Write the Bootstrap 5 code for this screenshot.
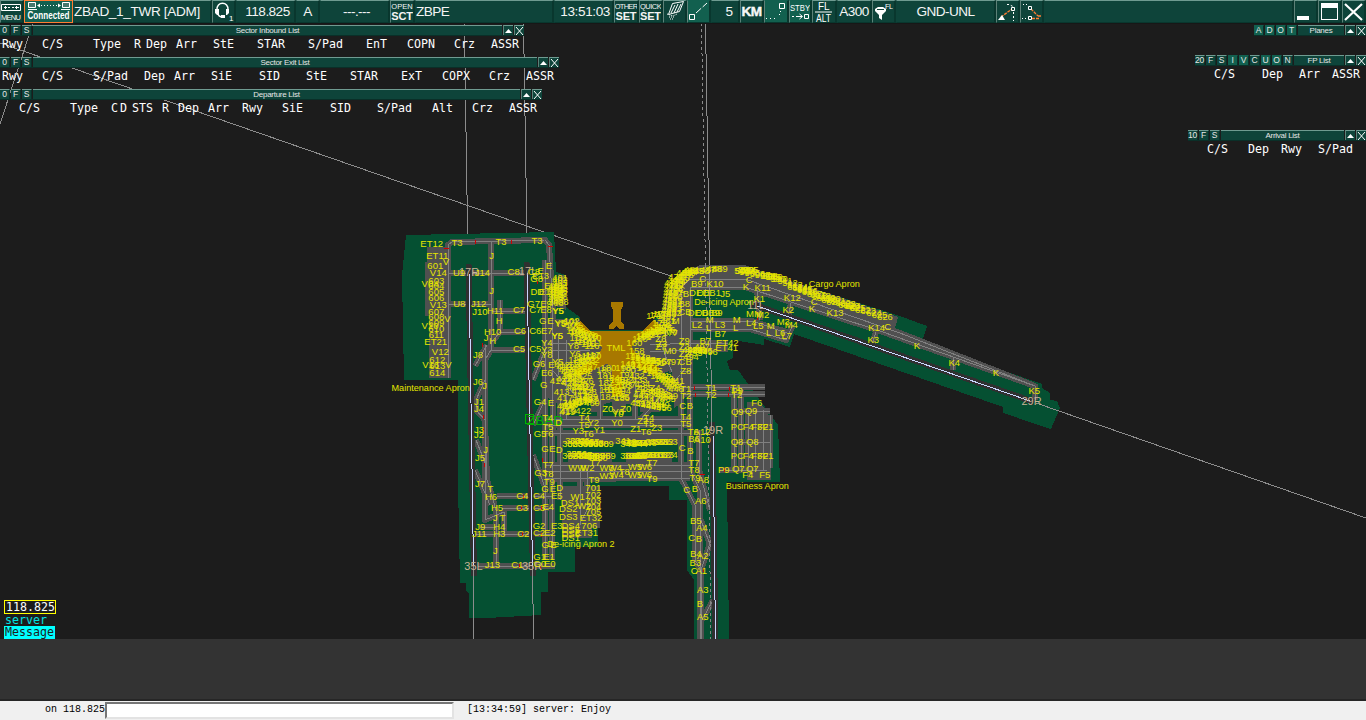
<!DOCTYPE html>
<html lang="en">
<head>
<meta charset="utf-8">
<meta name="viewport" content="width=device-width, initial-scale=1">
<title>ZBAD_1_TWR</title>
<link href="https://cdn.jsdelivr.net/npm/bootstrap@5.3.0/dist/css/bootstrap.min.css" rel="stylesheet">
<style>
body{width:1366px;height:720px;background:#1c1c1c;color:#fff;font-family:"Liberation Sans",Arial,sans-serif;line-height:1}
.topbar{display:grid;height:24px;background:#0a2f28;border-bottom:1px solid #171717;grid-template-columns:24px 49px 139px 24px 60px 24px 70px 25px 139px 60px 25px 24px 24px 24px 29px 24px 25px 23px 25px 35px 24px 100px 24px 24px 250px 24px 24px 24px}
.cell{background:#0e443a;border-top:1px solid #6f9b91;border-left:1px solid #5d8178;border-right:2px solid #09372e;border-bottom:1px solid #09372e;height:23px;overflow:hidden;font-size:13.6px;letter-spacing:-.55px;display:flex;align-items:center;justify-content:center;white-space:nowrap;color:#f4f4f4}
.cell svg{flex:none;letter-spacing:0}
.lit{background:#12604f;border-top-color:#12604f}
.flat{border-left-color:#0e443a}
.conn{background:#12604f;border:1px solid #ff7d32;height:23px}
.two{flex-direction:column;font-weight:700;font-size:11px;line-height:10px;letter-spacing:-.2px}
.two small{font-size:7.5px;line-height:9px;font-weight:400;letter-spacing:0}
.radar{height:615px}
.chart{left:0;top:-24px;z-index:0}
.lists{z-index:1}
.bar{height:11px;font-size:8px;letter-spacing:-.28px;color:#e6e6e6;border-bottom:1px solid #0a2f28}
.bar>*{background:#0e443a;border-top:1px solid #6f9b91;height:10px;display:flex;align-items:center;justify-content:center;white-space:nowrap}
.key{width:10px;margin-right:1px;border-right:1px solid #0a2f28;font-size:8.5px;letter-spacing:-.3px}
.key.on{background:#12604f;border-top-color:#12604f}
.sq{width:10px;margin-left:1px;border-left:1px solid #5d8178}
.heads{font:11.63px/16px "DejaVu Sans Mono",monospace;white-space:pre}
.comm{left:4px;top:576px;font:11.63px/13px "DejaVu Sans Mono",monospace;z-index:1}
.freq{border:1px solid #ffff00;line-height:12px;height:14px;width:52px;padding-left:1px}
.msg{background:#00ffff;color:#1c1c1c;width:51px}
.msg,.srv{padding-left:1px}
.srv{color:#00e0e0;height:12px;line-height:12px}
.strip{height:62px;background:#333;border-bottom:2px solid #262626}
.status{height:19px;background:#f0f0f0;color:#000;font:10px/17px "Liberation Mono",monospace;white-space:pre}
.entry{width:349px;height:17px;margin-top:1px;border:2px solid;border-color:#767676 #e3e3e3 #e3e3e3 #767676;border-radius:0;background:#fff;padding:0}
</style>
</head>
<body class="overflow-hidden d-flex flex-column m-0">
<header class="topbar">
  <div class="cell"><svg width="21" height="21"><path d="M.500 3.500h19v6h-19zM3 6.500h3M7 6.500h2M11 6.500h2M14 6.500h4M4.500 5v3M15.500 5v3" fill="none" stroke="#fff"/><text x="0" y="19" font-size="7.500" textLength="20" fill="#fff">MENU</text></svg></div>
  <div class="cell conn"><svg width="45" height="21"><path d="M2.500 1.500h7v5h-7zM36.500 1.500h7v5h-7z" fill="#47786e" stroke="#fff"/><path d="M2 8.500h9M35 8.500h9" stroke="#fff"/><path d="M12 4.500h22" stroke="#fff" stroke-dasharray="1 2"/><path d="M11 4.500l3-2v4zM35 4.500l-3-2v4z" fill="#fff"/><text x="1.500" y="17.500" font-size="10" font-weight="700" textLength="42" lengthAdjust="spacingAndGlyphs" fill="#fff">Connected</text></svg></div>
  <div class="cell flat justify-content-start" style="letter-spacing:-.35px">ZBAD_1_TWR [ADM]</div>
  <div class="cell"><svg width="22" height="21"><path d="M4 9C3 0 16 0 15 9M5 12c0 3 2 4 5 4" fill="none" stroke="#fff" stroke-width="1.500"/><path d="M2 8h4v6H4L2 12zM13 8h3v4l-2 2h-1zM8 14h4v3H8z" fill="#fff"/><text x="16" y="20" font-size="8" fill="#fff">1</text></svg></div>
  <div class="cell flat ps-1">118.825</div>
  <div class="cell flat">A</div>
  <div class="cell flat ps-1">---.---</div>
  <div class="cell two"><small>OPEN</small>SCT</div>
  <div class="cell flat justify-content-start" style="letter-spacing:-.6px">ZBPE</div>
  <div class="cell flat justify-content-end" style="padding-right:2px;letter-spacing:-.4px">13:51:03</div>
  <div class="cell two"><small style="letter-spacing:-.7px">OTHER</small>SET</div>
  <div class="cell two"><small style="letter-spacing:-.5px">QUICK</small>SET</div>
  <div class="cell"><svg width="22" height="21" fill="none" stroke="#fff"><path d="M8.500 2.500l11-2-4 10-11 3zM11 4l-4 8M14 3l-4 9M17 3l-4 8"/><path d="M3 13l6 2 4-2M5 16h5M6 18h3" stroke-dasharray="1 1"/></svg></div>
  <div class="cell lit"><svg width="22" height="21" fill="none" stroke="#fff"><path d="M1.500 13.500h5v5h-5z"/><path d="M8 12L19 2" stroke-dasharray="7 2"/></svg></div>
  <div class="cell flat ps-2">5</div>
  <div class="cell fw-bold" style="-webkit-text-stroke:.4px #fff">KM</div>
  <div class="cell lit"><svg width="22" height="21" fill="none" stroke="#fff"><path d="M14.500 2.500h5v5h-5z"/><path d="M1 17.500h11M14 13.500h1M15 10.500h1" stroke-dasharray="1 3"/></svg></div>
  <div class="cell lit"><svg width="21" height="21"><text x="0" y="10" font-size="9" textLength="20" lengthAdjust="spacingAndGlyphs" fill="#fff">STBY</text><path d="M2 15.500h2M6 15.500h6M9.500 13l3 2.500-3 2.500M14.500 13.500h4v4h-4z" fill="none" stroke="#fff"/></svg></div>
  <div class="cell"><svg width="22" height="21" fill="#fff"><text x="5" y="8.500" font-size="10">FL</text><path d="M2 11h17" stroke="#fff" stroke-width="1"/><text x="3" y="20.500" font-size="10" textLength="15" lengthAdjust="spacingAndGlyphs">ALT</text></svg></div>
  <div class="cell flat">A300</div>
  <div class="cell"><svg width="22" height="21" fill="#fff"><path d="M2 8l3-2h5l3 2v2l-4 4v5l-3-2v-3L2 10z"/><path d="M4 8.500h7" stroke="#0e443a"/><text x="12" y="7.500" font-size="7" textLength="8">FL</text></svg></div>
  <div class="cell flat">GND-UNL</div>
  <div class="cell"><svg width="22" height="21" fill="none"><path d="M4 16L15 8" stroke="#ff7d32" stroke-width="1.300" stroke-dasharray="3 1"/><path d="M1 19h7l-3-5z" fill="#fff"/><path d="M14.500 6.500h3v3h-3z" stroke="#fff"/><path d="M10 3.500h2l4 2M16.500 11v9" stroke="#fff" stroke-dasharray="2 2"/></svg></div>
  <div class="cell"><svg width="22" height="21" fill="none"><path d="M10 8l7 7M11 17.500h7M17 15h5" stroke="#ff7d32" stroke-width="1.300" stroke-dasharray="3 1"/><path d="M7.500 5.500h3v3h-3zM7.500 15.500h3v3h-3z" stroke="#fff"/><path d="M2 3.500h4M1 17.500h6" stroke="#fff" stroke-dasharray="1 2"/></svg></div>
  <div class="cell flat"></div>
  <div class="cell"><svg width="22" height="21"><path d="M2 15h12v4H2z" fill="#fff"/></svg></div>
  <div class="cell"><svg width="22" height="21"><path d="M2 2h17v17H2zM3 7v11h15V7z" fill="#fff" fill-rule="evenodd"/></svg></div>
  <div class="cell"><svg width="22" height="21"><path d="M2 3l17 16M19 3L2 19" stroke="#fff" stroke-width="2.200"/></svg></div>
</header>

<main class="radar position-relative overflow-hidden">
<svg class="chart position-absolute" width="1366" height="639" viewBox="0 0 1366 639" shape-rendering="crispEdges" fill="none">
  <!-- sector lines -->
  <path d="M0 43L672 276.500M33 23L0 124M464.300 23L474 639M523.500 23L533.500 639" stroke="#8c8c8c"/>
  <path d="M705.500 23L709.500 270" stroke="#8c8c8c"/>
  <path d="M701.500 23L705.500 270" stroke="#8c8c8c" stroke-dasharray="3 3"/>
  <!-- airfield ground -->
  <path fill="#055032" d="M406 235L554 232L556 272L566 275V307L580 317V330H652V322L665 308L668 290L680 274L700 265H745L780 278L897 315L927 326L922 342L1042 384V388L1050 393V400L1057 401L1060 408L1051 429L1003 413V407L794 334L790 347L764 339V345L733 340V358L727 361L730 370H738L778 425L780 482H727L729 639H694V580L687 570V500H669V486H598V547H575V572H548V592H541V615L487 618H469V594L466 590V583H460L458 482V380H404L402 275Z"/>
  <!-- aprons -->
  <g fill="#505050">
    <path d="M427 247H451V378H429V316H425V262H427zM558 274L566 276V310L556 306z"/>
    <path d="M546 318L580 320L590 334H650L660 316L668 290L680 274L700 265H745L775 276L898 317L894 332L860 322L740 286H694L690 300V374L684 400L670 412H570L548 398z"/>
    <path d="M690 318L755 320L792 330L787 342L752 331L690 330zM690 342H728V352H690zM560 434H585L590 430H680V444H560zM568 452H612V464H568zM626 452H672V464H626zM554 466H690V476H554zM562 486H600V528H592V538H562zM747 402H757L765 408L771 420V480H747z"/>
  </g>
  <path fill="#055032" d="M574 402H591V412H574zM604 404L612 402V416H604zM626 404H640V414H626zM660 400H674V412H660zM664 330H672V336H664zM656 376L672 370V382H658z"/>
  <!-- taxiways: pavement, then centrelines -->
  <g id="ways" stroke-width="6" stroke="#505050" stroke-linejoin="round"></g>
  <g stroke="#303030" stroke-width="6"><path d="M468.500 264L474 576M526.500 262L533 576M712 422L715.500 639M752 304L1034 402"/></g>
  <path d="M705.500 265L711 639" stroke="#858585" stroke-dasharray="3 3"/>
  <path d="M709.400 270L712 430M473.500 566L474 639M532.500 566L533.500 639M1036 403L1366 518" stroke="#8c8c8c"/>
  <path d="M469 272L473.500 566M527 272L532.500 566M713 434L715.500 639M757 306L1030 401" stroke="#c8d7ff"/>
  <path d="M475 240v4M511 240v4M444 248h5M548 246h5M537 281v3M482 343v4M483 415v4M483 428v4M484 463v4M523 495v4M521 506v4M522 532v4M541 506v4M541 533v4M519 564v4M540 566v4M542 458v4M694 386v4M695 393v4M729 387v4M728 393v4M700 474h5M724 468v4M757 316v4M786 322v4M703 568v4" stroke="#d00000"/>
  <!-- terminal and concourses -->
  <path fill="#a87800" d="M611 302H623V306L621 310V322L624 325V329H619L617 326L613 329H609V325L613 322V310L611 306zM580 321L591 331H642L654 320L661 327L637 339L632 347L636 354L660 368L656 376L630 365L622 366V396H612V366L606 364L578 377L575 370L598 356L602 348L598 339L575 327z"/>
  <path d="M525.500 414.500h8v9h-8z" stroke="#00b400"/>
  <g id="labels" font-family="Liberation Sans,Arial,sans-serif" text-anchor="middle" shape-rendering="auto"></g>
</svg>
<div class="lists position-relative d-flex justify-content-between align-items-start">
  <section id="left" class="d-flex flex-column align-items-start"></section>
  <section id="right" class="d-flex flex-column align-items-end"></section>
</div>
<div class="comm position-absolute">
  <div class="freq">118.825</div><div class="srv">server</div><div class="msg">Message</div>
</div>
</main>
<div class="strip"></div>
<footer class="status d-flex flex-fill align-items-start">
  <span class="text-end" style="width:105px">on 118.825</span>
  <input class="entry" aria-label="Message">
  <span style="margin-left:13px">[13:34:59] server: Enjoy</span>
</footer>

<script src="https://cdn.jsdelivr.net/npm/bootstrap@5.3.0/dist/js/bootstrap.bundle.min.js"></script>
<script>
// Flight lists: keys (a leading * is an active filter), title, left edge, title width, height, columns with their x
const lists = {
  left: [
    ['0 F S','Sector Inbound List',0,469,32,'Rwy 2,C/S 42,Type 93,R 134,Dep 146,Arr 176,StE 213,STAR 257,S/Pad 308,EnT 366,COPN 407,Crz 454,ASSR 491'],
    ['0 F S','Sector Exit List',0,504,32,'Rwy 2,C/S 42,S/Pad 93,Dep 144,Arr 174,SiE 211,SID 259,StE 306,STAR 350,ExT 401,COPX 442,Crz 489,ASSR 526'],
    ['0 F S','Departure List',0,487,32,'C/S 19,Type 70,C 111,D 120,STS 132,R 162,Dep 178,Arr 208,Rwy 242,SiE 282,SID 330,S/Pad 377,Alt 432,Crz 472,ASSR 509']],
  right: [
    ['*A *D *O *T','Planes',1254,46,30,''],
    ['20 F S *I *V C *U *O N','FP List',1195,50,75,'C/S 1214,Dep 1262,Arr 1299,ASSR 1332'],
    ['10 F S','Arrival List',1188,123,32,'C/S 1207,Dep 1248,Rwy 1281,S/Pad 1318']]
};
for (const side in lists) {
  document.getElementById(side).innerHTML = lists[side].map(([keys,title,x0,w,h,cols]) => {
    const c = cols ? cols.split(',').map(s => s.split(' ')) : [];
    return `<div style="height:${h}px;padding-top:1px"><div class="bar d-flex">` +
      keys.split(' ').map(k => `<span class="key ${k[0]=='*'?'on':''}">${k.replace('*','')}</span>`).join('') +
      `<span style="width:${w}px">${title}</span><span class="sq"><svg width="9" height="8"><path d="M1 6h7L4.500 2z" fill="#fff"/></svg></span><span class="sq"><svg width="9" height="8"><path d="M1 0l7 8M8 0L1 8" stroke="#fff"/></svg></span></div>` +
      `<div class="heads d-flex" style="width:0;padding-left:${c.length ? c[0][1]-x0 : 0}px">` +
      c.map(([t,x],i) => `<span class="flex-shrink-0" style="width:${(c[i+1] ? c[i+1][1] : +x+30)-x}px">${t}</span>`).join('') + '</div></div>';
  }).join('');
}

// Taxiway centrelines
const ways = `M448 378V245L452 242L545 240L549 245L553 310L552 560
M491 242V350L485 360V380L476 400V410L485 420L487 480L496 510V565M485 345V520L504 512V535
M448 273H530M448 304H491M492 311H530M500 300V332L491 343M500 332H530M491 350H530
M497 496H552M502 508H552M480 527H496M475 534H552M478 566H555
M545 260V560M545 350L533 380M545 400L533 425M533 455L546 490M476 440L486 465M475 470L490 505M487 345L475 366
M546 419H690M546 425H690M546 433H690M546 465H690M546 471H690M546 479L690 478M560 400V500M580 470V525M587 470V510L582 520
M548 343H580M548 350H590M558 335V375M552 370L580 400M566 340V420M600 370V420M635 370V420M650 345L690 343M650 352L690 350M640 420L680 375M655 330L672 372
M681 287V478L695 505V560L701 570V639M690 287V470L700 490V639M681 287L690 279H745L900 333L1035 386V400
M690 287H745L880 331L1035 386M690 321H752L790 334M690 329H750L786 340L793 325M683 343H728M683 387H765M683 394H765M680 371H690
M741 387V470M734 387V470M699 430V470L710 510M701 520L712 550M701 570L711 540M702 620L713 600
M720 470H767M736 411H770M736 442H770M748 410V470M755 410V470M763 410V470M770 415V468M757 290L760 320M791 303L788 318M876 332L872 345M954 358L953 370M665 325V360`;
document.getElementById('ways').innerHTML = `<path d="${ways}"/><path d="${ways}" stroke="#808080" stroke-width="1"/>`;

// Chart labels, in plates drawn at three units per pixel: origin, then "x y text"
const plates = [
 [390,225,'125 56 ET12|201 53 T3|333 50 T3|441 47 T3|142 92 ET11|168 110 V|136 122 601|145 142 V14|207 142 U9|277 141 J14|371 140 C8|139 165 603|120 174 V04|139 182 604|139 198 605|139 217 606|145 237 V13|208 236 U8|266 236 J12|270 258 J10|316 257 H11|387 254 C7|139 258 607|139 275 608|139 292 609|172 281 V|120 302 V10|139 310 610|139 328 611|328 287 H|308 320 H10|288 337 J|390 316 C6|308 347 H|137 350 ET21|387 371 C5|151 380 V12|264 388 J8|142 403 612|122 418 V16|142 421 613|175 418 V|142 442 614|264 468 J6|284 481 J|267 530 J1|267 550 J4|305 92 J|305 196 J|477 122 E|432 140 C8|452 135 E|440 160 G8|452 152 E13|442 200 DD|431 235 G7|468 235 E9|512 230 408|436 254 C7|468 252 E8|503 256 Y5|458 285 G|481 285 E|510 293 Y5|436 316 C6|470 316 E7|502 332 Y5|436 371 C5|470 352 Y4|470 372 Y3|470 388 Y8|447 414 G6|484 418 E|503 410 Y5|470 443 E6|461 478 G|450 530 G4|483 532 E|503 466 412|515 500 413|525 518 417|525 540 418|532 558 419|473 578 T4|472 180 E|472 200 E10'],
 [390,415,'267 43 J3|267 59 J2|287 103 J|270 128 J5|270 206 J7|301 220 T|303 245 H6|321 278 H5|316 306 J|338 308 T|271 334 J9|328 334 H4|268 355 J11|328 354 H3|316 405 J|307 449 J13|382 449 C1|397 242 C4|396 278 C3|400 355 C2|447 242 C4|447 278 C3|447 332 G2|447 353 C2|500 242 E5|475 275 E4|479 353 E2|466 388 G|490 388 E|449 425 G1|477 425 E1|449 446 G0|479 446 E0|450 56 G5|474 56 T6|473 33 T5|506 22 D|465 101 G|487 101 E|508 104 D|474 149 T7|452 173 G3|474 175 T8|478 198 T9|465 220 G|489 219 E|509 217 D'],
 [540,400,'133 52 T4|133 72 T5|160 66 Y2|115 90 Y3|178 88 Y1|145 100 T6|203 25 Z0|257 25 Z0|233 40 Y0|231 66 Y0|326 52 T4|308 62 Z2|287 86 Z1|318 95 T6|326 70 T5|350 82 Z3|428 17 C|450 17 B|437 50 T4|437 70 T5|460 95 T6|486 95 A12|462 116 B6|487 117 A10|427 142 C|451 152 B|462 187 T7|462 208 T8|465 233 T9|490 238 A8|165 187 T7|112 203 WW|142 203 W2|200 203 W3|225 203 W4|253 214 T8|285 200 W5|315 200 W6|200 227 W3|230 224 W4|285 224 W5|315 224 W6|162 238 T9|336 235 T9|336 187 T7|440 268 C|465 265 B|482 302 A6|467 362 B5|485 383 A4|455 412 C|477 416 B|467 460 B4|488 466 A2|160 263 701|160 283 702|160 300 703|160 318 704|160 334 705|113 290 W1|133 316 W2|90 306 DS1|85 326 DS2|85 350 DS3|153 351 ET32|148 375 706|92 375 DS4|140 397 ET31|92 388 DS5|92 400 DS6|92 411 DS1|50 375 E3|123 429 De-icing Apron 2'],
 [540,255,'228 276 TML|55 165 Y5|62 205 Y5|52 240 Y5|95 197 102|150 245 110|165 263 111|283 263 160|100 270 Y8|105 295 Y6|160 300 120|290 285 158|362 250 Z8|362 273 Z7|390 285 M0|392 230 M0|400 320 497|106 397 Y4|143 400 Y4|160 437 Y2|300 400 Z2|345 396 Z4|390 422 439|295 430 Z2|120 420 413|120 440 417|90 447 418|85 465 419|130 465 422|235 468 Y0|205 338 180|250 338 198|365 265 Z3|410 375 441'],
 [650,255,'158 70 C|140 84 B9|195 84 K10|298 72 C|288 95 K|338 98 K11|328 131 K1|95 103 C|108 115 B|137 113 DE|160 113 DE|185 113 DB1|226 115 J5|222 138 De-icing Apron|312 175 MM|338 179 M2|179 194 M|260 194 M|141 207 L2|210 207 L3|304 203 L4|325 212 L5|362 212 M|400 200 M3|424 207 M4|176 217 L|257 217 L|211 236 B7|166 256 B7|356 232 L|390 233 L6|410 241 L7|232 263 ET42|230 278 ET41|103 255 Z9|103 275 Z3|103 296 Z2|95 320 C|116 320 B|107 345 Z8|103 145 B8|95 170 C|115 170 B|133 173 DE|156 173 DB|182 173 DB9|200 173 B9|77 197 M|107 400 T1|183 396 T1|257 396 T1|107 420 T2|183 417 T2|260 417 T2|262 405 P9'],
 [680,370,'172 125 Q9|213 122 Q9|172 168 PC|205 168 F4|230 168 F3|248 168 F2|264 168 F1|171 215 Q8|217 215 Q8|172 257 PC|205 255 F4|230 255 F3|248 255 F2|264 255 F1|131 299 P9|175 295 Q7|217 295 Q7|203 314 F4|254 314 F5|230 98 F6|232 345 Business Apron|64 600 A1|68 659 A3|60 701 B|68 740 A5|46 578 B3|43 601 C'],
 [740,255,'157 128 K12|145 164 K2|223 140 C|216 161 K|285 173 K13|410 217 K14|443 215 C|400 254 K3|531 271 K|643 323 K4|768 352 K|883 407 K5|283 84 Cargo Apron'],
 [390,386,'122 3 Maintenance Apron']
];
const runways = '469 272 17R|528 271 17L|473.500 566 35L|532 566 35R|713 430 19R|756 305 11L|1031.500 401 29R';

// Numbered parking stands: first number, count, start point, end point
const stands = [
 [401,8,560,277,560,296],[401,8,556,285,556,302],[101,4,571,321,578,330],[104,7,574,330,594,337],[112,5,577,337,592,345],
 [117,5,593,354,576,359],[122,6,592,359,572,366],[127,5,590,366,570,375],[180,5,604,369,608,396],[190,6,628,369,622,396],
 [183,4,610,386,622,397],[412,10,562,364,582,386],[422,6,564,378,590,398],[414,6,567,405,585,399],[424,7,583,370,592,402],
 [140,6,628,363,655,370],[146,6,633,355,657,362],[152,6,638,359,664,361],[160,6,640,338,658,330],[166,6,644,335,665,326],
 [171,4,654,315,664,313],[173,5,660,322,670,332],[461,12,668,320,672,282],[462,10,674,312,676,276],[473,9,676,283,692,269],
 [483,7,684,272,720,268],[451,6,638,402,664,407],[441,8,662,375,676,388],[445,5,641,393,662,404],[430,6,656,390,668,398],
 [191,5,646,366,662,378],[492,5,690,349,710,351],[494,4,691,356,702,346],[432,5,637,375,648,391],[184,4,612,377,628,384],
 [302,8,570,443,606,443],[303,6,573,440,596,442],[341,4,623,440,640,443],[343,11,628,443,670,441],
 [352,8,570,455,608,455],[355,6,574,453,600,457],[363,5,628,455,640,455],[366,9,640,455,670,454],
 [502,4,743,270,751,269],[503,8,742,270,778,278],[508,9,770,275,810,290],[613,9,795,286,834,301],[617,9,818,294,858,307],[619,8,846,304,885,316]
];
const text = (x,y,t,s,c) => `<text x="${x.toFixed(1)}" y="${(y+.4+s*.34).toFixed(1)}" font-size="${s}" fill="${c}">${t}</text>`;
let out = text(545,419.500,'ZBAD',13.5,'#00b400');
runways.split('|').forEach(r => { const [x,y,t] = r.split(' '); out += text(+x,+y,t,11,'#c8b496'); });
for (const [n,count,x1,y1,x2,y2] of stands)
  for (let i = 0; i < count; i++) { const k = i/(count-1); out += text(x1+(x2-x1)*k, y1+(y2-y1)*k, n+i, 9.3, '#e6e600'); }
for (const [ox,oy,items] of plates)
  for (const item of items.split('|')) { const [x,y,...t] = item.split(' '); out += text(ox+x/3, oy+y/3, t.join(' '), t.join('').length > 6 ? 9.1 : 9.5, '#e6e600'); }
document.getElementById('labels').innerHTML = out;
</script>
</body>
</html>
